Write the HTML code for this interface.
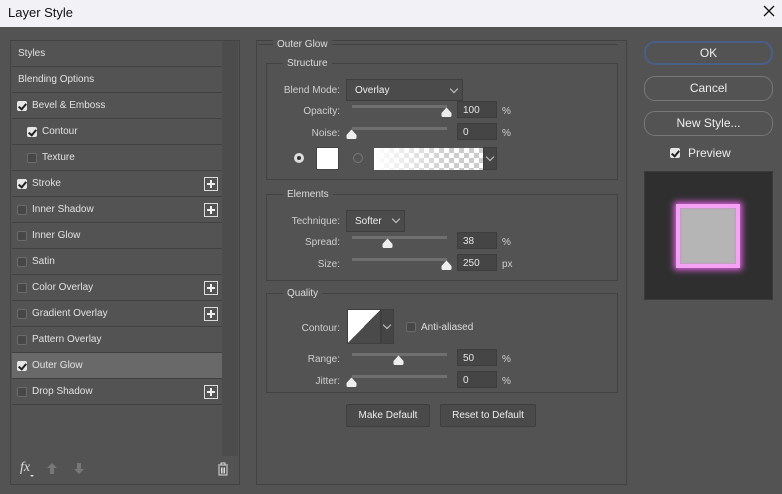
<!DOCTYPE html>
<html><head><style>
*{margin:0;padding:0;box-sizing:border-box}
body{width:782px;height:494px;background:#535353;font-family:"Liberation Sans",sans-serif;font-size:10px;color:#d6d6d6;position:relative;overflow:hidden}
.a{position:absolute}
.title{left:0;top:0;width:782px;height:27px;background:#f2f2f6;color:#111;font-size:13px;padding:5px 0 0 8px}
.row{position:absolute;left:12px;width:210px;height:26px;border-bottom:1px solid #414141;line-height:26px;padding-left:6px;color:#e2e2e2}
.cb{position:absolute;width:10px;height:10px;border:1px solid #6a6a6a;border-radius:2px;background:#474747;top:8px}
.cb.on{background:#e6e6e6;border-color:#e6e6e6}
.cb.on:after{content:"";position:absolute;left:2px;top:0px;width:3px;height:6px;border:solid #222;border-width:0 2px 2px 0;transform:rotate(40deg)}
.plus{position:absolute;left:192px;top:6px;width:14px;height:14px;border:1px solid #ddd}
.plus:before{content:"";position:absolute;left:2px;top:5px;width:8px;height:2px;background:#eee}
.plus:after{content:"";position:absolute;left:5px;top:2px;width:2px;height:8px;background:#eee}
.grp{position:absolute;border:1px solid #424242}
.lg{position:absolute;background:#535353;padding:0 4px;color:#ddd}
.lbl{position:absolute;text-align:right;width:80px;color:#cfcfcf}
.inp{position:absolute;width:40px;height:17px;background:#454545;border:1px solid #3d3d3d;padding:3px 0 0 5px;color:#e6e6e6}
.track{position:absolute;height:3px;width:95px;background:#6f6f6f}
.thumb{position:absolute;width:11px;height:10px;background:url("") }
.pct{position:absolute;color:#cfcfcf}
.sel{position:absolute;height:22px;border:1px solid #3e3e3e;background:#4b4b4b;color:#eee;padding:5px 0 0 8px}
.chev{position:absolute;width:6px;height:6px;border:solid #ccc;border-width:0 1px 1px 0;transform:rotate(45deg)}
.btn{position:absolute;border:1px solid #777;border-radius:11px;text-align:center;color:#eee;font-size:12px;line-height:22px}
.btn2{position:absolute;height:23px;border:1px solid #3e3e3e;background:#4a4a4a;border-radius:2px;text-align:center;line-height:22px;color:#eee;font-size:10px}
</style></head><body>
<svg width="0" height="0" style="position:absolute"><defs><path id="th" d="M5.5 0.5L10.5 6V8.5Q10.5 10 9 10H2Q0.5 10 0.5 8.5V6Z" fill="#eee"/></defs></svg>
<div class="a title">Layer Style</div>
<svg class="a" style="left:763px;top:5px" width="12" height="12"><path d="M1 1L11 11M11 1L1 11" stroke="#111" stroke-width="1.3"/></svg>

<div class="a" style="left:10px;top:40px;width:230px;height:445px;border:1px solid #424242"></div>
<div class="a" style="left:222px;top:41px;width:16px;height:415px;background:#4c4c4c"></div>
<div class="row" style="top:41px">Styles</div>
<div class="row" style="top:67px">Blending Options</div>
<div class="row" style="top:93px;padding-left:20px"><span class="cb on" style="left:5px"></span>Bevel &amp; Emboss</div>
<div class="row" style="top:119px;padding-left:20px"><span class="cb on" style="left:15px"></span><span style="padding-left:10px">Contour</span></div>
<div class="row" style="top:145px;padding-left:30px"><span class="cb" style="left:15px"></span>Texture</div>
<div class="row" style="top:171px;padding-left:20px"><span class="cb on" style="left:5px"></span>Stroke<span class="plus"></span></div>
<div class="row" style="top:197px;padding-left:20px"><span class="cb" style="left:5px"></span>Inner Shadow<span class="plus"></span></div>
<div class="row" style="top:223px;padding-left:20px"><span class="cb" style="left:5px"></span>Inner Glow</div>
<div class="row" style="top:249px;padding-left:20px"><span class="cb" style="left:5px"></span>Satin</div>
<div class="row" style="top:275px;padding-left:20px"><span class="cb" style="left:5px"></span>Color Overlay<span class="plus"></span></div>
<div class="row" style="top:301px;padding-left:20px"><span class="cb" style="left:5px"></span>Gradient Overlay<span class="plus"></span></div>
<div class="row" style="top:327px;padding-left:20px"><span class="cb" style="left:5px"></span>Pattern Overlay</div>
<div class="row" style="top:353px;padding-left:20px;background:#696969"><span class="cb on" style="left:5px"></span>Outer Glow</div>
<div class="row" style="top:379px;padding-left:20px"><span class="cb" style="left:5px"></span>Drop Shadow<span class="plus"></span></div>
<div class="a" style="left:20px;top:460px;font-style:italic;font-size:14px;color:#ddd;font-family:'Liberation Serif',serif">fx</div>
<div class="a" style="left:30px;top:475px;border-left:2px solid transparent;border-right:2px solid transparent;border-top:2px solid #ddd"></div>
<svg class="a" style="left:46px;top:462px" width="12" height="13"><path d="M6 1L1 6H4V12H8V6H11Z" fill="#777"/></svg>
<svg class="a" style="left:73px;top:462px" width="12" height="13"><path d="M6 12L1 7H4V1H8V7H11Z" fill="#777"/></svg>
<svg class="a" style="left:217px;top:462px" width="12" height="14"><path d="M1 3H11M4 3V1H8V3M2 4V13H10V4M4.5 5.5V11.5M6 5.5V11.5M7.5 5.5V11.5" stroke="#ddd" fill="none"/></svg>

<div class="a" style="left:256px;top:40px;width:371px;height:445px;border:1px solid #424242"></div>
<div class="a" style="left:258px;top:44px;width:360px;height:1px;background:#424242"></div>
<div class="lg" style="left:273px;top:39px">Outer Glow</div>

<div class="grp" style="left:266px;top:63px;width:352px;height:117px"></div>
<div class="lg" style="left:283px;top:58px">Structure</div>
<div class="lbl" style="left:260px;top:85px">Blend Mode:</div>
<div class="sel" style="left:346px;top:79px;width:117px">Overlay</div><div class="chev" style="left:451px;top:86px"></div>
<div class="lbl" style="left:260px;top:106px">Opacity:</div>
<div class="track" style="left:352px;top:105px"></div><svg class="a" style="left:441px;top:107px" width="11" height="11"><use href="#th"/></svg>
<div class="inp" style="left:457px;top:101px">100</div><div class="pct" style="left:502px;top:106px">%</div>
<div class="lbl" style="left:260px;top:128px">Noise:</div>
<div class="track" style="left:352px;top:127px"></div><svg class="a" style="left:346px;top:129px" width="11" height="11"><use href="#th"/></svg>
<div class="inp" style="left:457px;top:123px">0</div><div class="pct" style="left:502px;top:128px">%</div>
<div class="a" style="left:294px;top:153px;width:10px;height:10px;border-radius:50%;background:#ddd"></div>
<div class="a" style="left:297px;top:156px;width:4px;height:4px;border-radius:50%;background:#333"></div>
<div class="a" style="left:316px;top:147px;width:23px;height:23px;background:#fff;border:1px solid #444"></div>
<div class="a" style="left:353px;top:153px;width:10px;height:10px;border-radius:50%;border:1px solid #777"></div>
<div class="a" style="left:374px;top:148px;width:110px;height:22px;background-image:linear-gradient(90deg,#fff 0%,rgba(255,255,255,0) 70%),repeating-conic-gradient(#ccc 0 25%,#fff 0 50%);background-size:100% 100%,10px 10px"></div>
<div class="a" style="left:483px;top:147px;width:14px;height:23px;background:#454545;border:1px solid #3d3d3d"></div><div class="chev" style="left:487px;top:154px"></div>

<div class="grp" style="left:266px;top:194px;width:352px;height:87px"></div>
<div class="lg" style="left:283px;top:189px">Elements</div>
<div class="lbl" style="left:260px;top:216px">Technique:</div>
<div class="sel" style="left:346px;top:210px;width:59px">Softer</div><div class="chev" style="left:393px;top:216px"></div>
<div class="lbl" style="left:260px;top:237px">Spread:</div>
<div class="track" style="left:352px;top:236px"></div><svg class="a" style="left:382px;top:238px" width="11" height="11"><use href="#th"/></svg>
<div class="inp" style="left:457px;top:232px">38</div><div class="pct" style="left:502px;top:237px">%</div>
<div class="lbl" style="left:260px;top:259px">Size:</div>
<div class="track" style="left:352px;top:258px"></div><svg class="a" style="left:441px;top:260px" width="11" height="11"><use href="#th"/></svg>
<div class="inp" style="left:457px;top:254px">250</div><div class="pct" style="left:502px;top:259px">px</div>

<div class="grp" style="left:266px;top:293px;width:352px;height:100px"></div>
<div class="lg" style="left:283px;top:288px">Quality</div>
<div class="lbl" style="left:260px;top:323px">Contour:</div>
<div class="a" style="left:347px;top:309px;width:34px;height:35px;border:1px solid #3e3e3e;background:linear-gradient(to bottom right,#fff 50%,#4a4a4a 50%)"></div>
<div class="a" style="left:381px;top:309px;width:13px;height:35px;background:#454545;border:1px solid #3e3e3e"></div><div class="chev" style="left:384px;top:322px"></div>
<div class="cb" style="left:406px;top:322px"></div><div class="a" style="left:421px;top:322px;color:#ddd">Anti-aliased</div>
<div class="lbl" style="left:260px;top:354px">Range:</div>
<div class="track" style="left:352px;top:353px"></div><svg class="a" style="left:393px;top:355px" width="11" height="11"><use href="#th"/></svg>
<div class="inp" style="left:457px;top:349px">50</div><div class="pct" style="left:502px;top:354px">%</div>
<div class="lbl" style="left:260px;top:376px">Jitter:</div>
<div class="track" style="left:352px;top:375px"></div><svg class="a" style="left:346px;top:377px" width="11" height="11"><use href="#th"/></svg>
<div class="inp" style="left:457px;top:371px">0</div><div class="pct" style="left:502px;top:376px">%</div>

<div class="btn2" style="left:346px;top:404px;width:84px">Make Default</div>
<div class="btn2" style="left:440px;top:404px;width:96px">Reset to Default</div>

<div class="btn" style="left:644px;top:41px;width:129px;height:24px;border:2px solid #4a5f88;line-height:20px">OK</div>
<div class="btn" style="left:644px;top:76px;width:129px;height:25px">Cancel</div>
<div class="btn" style="left:644px;top:111px;width:129px;height:25px">New Style...</div>
<div class="cb on" style="left:670px;top:148px"></div>
<div class="a" style="left:688px;top:146px;font-size:12px;color:#eee">Preview</div>
<div class="a" style="left:644px;top:171px;width:129px;height:129px;background:#2f2f2f;border:1px solid #3a3a3a"></div>
<div class="a" style="left:676px;top:204px;width:64px;height:64px;background:#b5b5b5;border:4px solid #f4a2f4;box-shadow:0 0 6px 2px #e060e0,inset 0 0 2px #e070e0"></div>
</body></html>
